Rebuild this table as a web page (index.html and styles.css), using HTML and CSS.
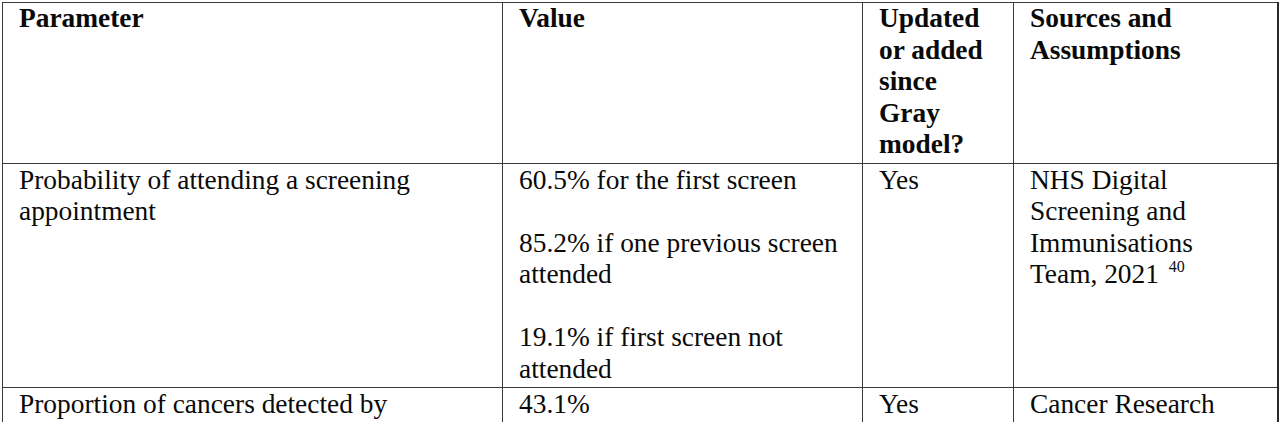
FILE: index.html
```html
<!DOCTYPE html>
<html lang="en">
<head>
<meta charset="utf-8">
<title>Model parameters</title>
<link rel="stylesheet" href="styles.css">
</head>
<body>
<table class="params">
  <colgroup>
    <col class="c-param">
    <col class="c-value">
    <col class="c-upd">
    <col class="c-src">
  </colgroup>
  <thead>
    <tr class="head-row">
      <th>Parameter</th>
      <th>Value</th>
      <th>Updated<br>or added<br>since<br>Gray<br>model?</th>
      <th>Sources and<br>Assumptions</th>
    </tr>
  </thead>
  <tbody>
    <tr class="row">
      <td>Probability of attending a screening<br>appointment</td>
      <td>
        <p class="para">60.5% for the first screen</p>
        <p class="para">85.2% if one previous screen<br>attended</p>
        <p class="para">19.1% if first screen not<br>attended</p>
      </td>
      <td>Yes</td>
      <td>NHS Digital<br>Screening and<br>Immunisations<br>Team, 2021 <sup class="ref">40</sup></td>
    </tr>
    <tr class="row last">
      <td>Proportion of cancers detected by</td>
      <td>43.1%</td>
      <td>Yes</td>
      <td>Cancer Research</td>
    </tr>
  </tbody>
</table>
</body>
</html>
```

FILE: styles.css
```css
html, body {
  margin: 0;
  padding: 0;
  background: #ffffff;
}

body {
  padding: 2px 0 0 2px;
  font-family: "Liberation Serif", "Times New Roman", serif;
  font-size: 27.4px;
  line-height: 31.5px;
  color: #0a0a0a;
}

.params {
  border-collapse: collapse;
  table-layout: fixed;
  width: 1275px;
  font-family: "Liberation Serif", "Times New Roman", serif;
  border-right: 2px solid #2a2a2a;
  border-bottom: 2px solid #2a2a2a;
}

.c-param { width: 500px; }
.c-value { width: 360px; }
.c-upd { width: 151px; }
.c-src { width: 264px; }

.params th,
.params td {
  border: 1px solid #3a3a3a;
  padding: 0 8px 2px 16px;
  vertical-align: top;
  text-align: left;
  overflow: hidden;
  white-space: nowrap;
}

.params th {
  font-weight: bold;
}

.head-row th {
  height: 157px;
}

.row td {
  padding-top: 1px;
}

.para {
  margin: 0 0 31.5px 0;
}

.para:last-child {
  margin-bottom: 0;
}

.ref {
  font-size: 16px;
  line-height: 0;
  vertical-align: 11px;
  margin-left: 3px;
}

.last td {
  padding-bottom: 1px;
}
```
